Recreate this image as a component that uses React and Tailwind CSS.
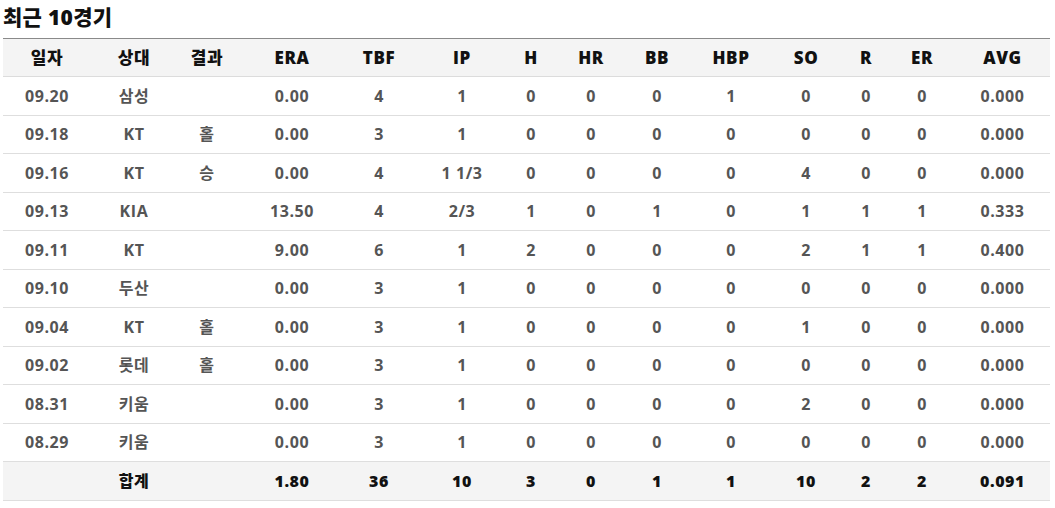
const COLS = [
  { key: 'date', label: '일자', w: 88 },
  { key: 'opp', label: '상대', w: 86 },
  { key: 'res', label: '결과', w: 60 },
  { key: 'era', label: 'ERA', w: 110 },
  { key: 'tbf', label: 'TBF', w: 64 },
  { key: 'ip', label: 'IP', w: 102 },
  { key: 'h', label: 'H', w: 36 },
  { key: 'hr', label: 'HR', w: 84 },
  { key: 'bb', label: 'BB', w: 48 },
  { key: 'hbp', label: 'HBP', w: 100 },
  { key: 'so', label: 'SO', w: 50 },
  { key: 'r', label: 'R', w: 70 },
  { key: 'er', label: 'ER', w: 42 },
  { key: 'avg', label: 'AVG', w: 107 },
];

const ROWS = [
  ['09.20', '삼성', '', '0.00', '4', '1', '0', '0', '0', '1', '0', '0', '0', '0.000'],
  ['09.18', 'KT', '홀', '0.00', '3', '1', '0', '0', '0', '0', '0', '0', '0', '0.000'],
  ['09.16', 'KT', '승', '0.00', '4', '1 1/3', '0', '0', '0', '0', '4', '0', '0', '0.000'],
  ['09.13', 'KIA', '', '13.50', '4', '2/3', '1', '0', '1', '0', '1', '1', '1', '0.333'],
  ['09.11', 'KT', '', '9.00', '6', '1', '2', '0', '0', '0', '2', '1', '1', '0.400'],
  ['09.10', '두산', '', '0.00', '3', '1', '0', '0', '0', '0', '0', '0', '0', '0.000'],
  ['09.04', 'KT', '홀', '0.00', '3', '1', '0', '0', '0', '0', '1', '0', '0', '0.000'],
  ['09.02', '롯데', '홀', '0.00', '3', '1', '0', '0', '0', '0', '0', '0', '0', '0.000'],
  ['08.31', '키움', '', '0.00', '3', '1', '0', '0', '0', '0', '2', '0', '0', '0.000'],
  ['08.29', '키움', '', '0.00', '3', '1', '0', '0', '0', '0', '0', '0', '0', '0.000'],
];

const TOTAL = ['', '합계', '', '1.80', '36', '10', '3', '0', '1', '1', '10', '2', '2', '0.091'];

// last column sits a little right of its cell centre
const cellPad = (j) => (j === 13 ? 'pl-[12px]' : '');

export default function App() {
  return (
    <div
      className="w-[1055px] h-[508px] bg-white pl-[3px] pr-[5px]"
      style={{ fontFamily: '"Open Sans", "Noto Sans CJK KR", sans-serif' }}
    >
      <h2 className="h-[38px] pt-[3px] text-[21px] font-black leading-[28px] text-[#111] tracking-[0.3px]">
        최근 10경기
      </h2>

      <table className="w-[1047px] table-fixed border-collapse text-center text-[16px] font-bold tracking-[0.6px]">
        <colgroup>
          {COLS.map((c) => (
            <col key={c.key} style={{ width: c.w }} />
          ))}
        </colgroup>
        <thead>
          <tr className="h-[38px] bg-[#f4f4f4] border-t border-[#8a8a8a] border-b border-b-[#dcdcdc]">
            {COLS.map((c, j) => (
              <th key={c.key} className={`p-0 text-[17px] font-extrabold text-[#111] ${cellPad(j)}`}>
                {c.label}
              </th>
            ))}
          </tr>
        </thead>
        <tbody>
          {ROWS.map((row, i) => (
            <tr key={i} className="h-[38.5px] border-b border-[#dedede] text-[#555]">
              {row.map((v, j) => (
                <td key={j} className={`p-0 ${cellPad(j)}`}>
                  {v}
                </td>
              ))}
            </tr>
          ))}
          {/* total */}
          <tr className="h-[38.5px] bg-[#f4f4f4] border-b border-[#dedede] text-[#111]">
            {TOTAL.map((v, j) => (
              <td key={j} className={`p-0 font-extrabold ${cellPad(j)}`}>
                {v}
              </td>
            ))}
          </tr>
        </tbody>
      </table>
    </div>
  );
}
